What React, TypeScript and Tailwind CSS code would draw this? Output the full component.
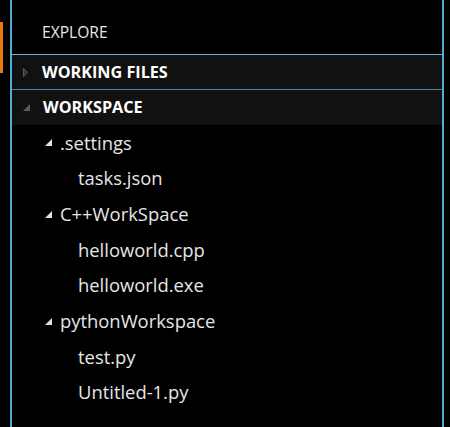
import React from "react";

const font = { fontFamily: '"Open Sans", "Noto Sans", sans-serif' };

function Corner({ color }: { color: string }) {
  return (
    <svg width="7" height="7" viewBox="0 0 7 7" className="shrink-0">
      <polygon points="7,0 7,7 0,7" fill={color} />
    </svg>
  );
}

function Row({ depth, label, folder }: { depth: number; label: string; folder?: boolean }) {
  return (
    <div className="flex h-[35.7px] items-center text-[18.4px] text-[#e6e6e6]" style={{ paddingLeft: depth }}>
      {folder && (
        <span className="mr-[8px] flex">
          <Corner color="#e0e0e0" />
        </span>
      )}
      <span className="leading-none">{label}</span>
    </div>
  );
}

export default function App() {
  return (
    <div className="flex h-[427px] w-[450px] overflow-hidden bg-black" style={font}>
      <div className="relative w-[10px] shrink-0">
        <div className="absolute left-0 top-[22px] h-[51px] w-[3px] bg-[#e8790f]" />
      </div>
      <div className="w-[2px] shrink-0 bg-[#55acd2]" />
      <div className="flex w-[430px] shrink-0 flex-col">
        <div className="flex h-[54px] items-center pl-[30px] pt-[12px] text-[15.6px] text-[#e8e8e8]">EXPLORE</div>
        <div className="h-[1px] bg-[#5bb6dc]" />
        <div className="flex h-[34px] items-center bg-[#111111] pl-[11px] text-[16.2px] font-bold text-white">
          <svg width="5" height="9" viewBox="0 0 5 9" className="mr-[14px]">
            <polygon points="0.5,0.5 4.5,4.5 0.5,8.5" fill="#333" stroke="#5a5a5a" strokeWidth="1" />
          </svg>
          WORKING FILES
        </div>
        <div className="h-[1px] bg-[#3f8796]" />
        <div className="flex h-[35px] items-center bg-[#111111] pl-[11px] text-[16.2px] font-bold text-white">
          <span className="mr-[13px] flex">
            <Corner color="#5a5a5a" />
          </span>
          WORKSPACE
        </div>
        <div className="flex flex-col">
          <Row depth={33} label=".settings" folder />
          <Row depth={66} label="tasks.json" />
          <Row depth={33} label="C++WorkSpace" folder />
          <Row depth={66} label="helloworld.cpp" />
          <Row depth={66} label="helloworld.exe" />
          <Row depth={33} label="pythonWorkspace" folder />
          <Row depth={66} label="test.py" />
          <Row depth={66} label="Untitled-1.py" />
        </div>
      </div>
      <div className="w-[2px] shrink-0 bg-[#55acd2]" />
    </div>
  );
}
